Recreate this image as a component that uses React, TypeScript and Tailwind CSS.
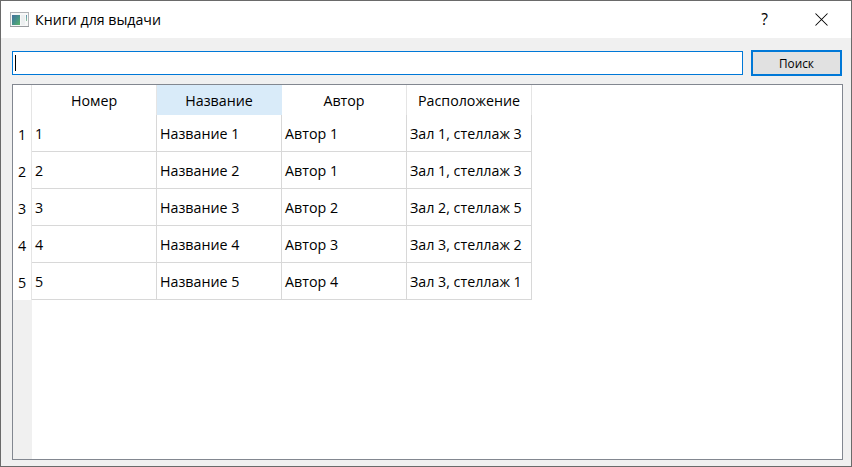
const columns = [
  { title: "Номер", tone: "bg-white border-[#e5e5e5]" },
  { title: "Название", tone: "bg-[#d9ebf9] border-[#d9ebf9]" },
  { title: "Автор", tone: "bg-white border-[#e5e5e5]" },
  { title: "Расположение", tone: "bg-white border-[#e5e5e5]" },
];

const rows = [
  ["1", "Название 1", "Автор 1", "Зал 1, стеллаж 3"],
  ["2", "Название 2", "Автор 1", "Зал 1, стеллаж 3"],
  ["3", "Название 3", "Автор 2", "Зал 2, стеллаж 5"],
  ["4", "Название 4", "Автор 3", "Зал 3, стеллаж 2"],
  ["5", "Название 5", "Автор 4", "Зал 3, стеллаж 1"],
];

function WindowIcon() {
  return (
    <svg width="19" height="16" viewBox="0 0 19 16" className="block">
      <defs>
        <linearGradient id="pane" x1="0" y1="0" x2="1" y2="1">
          <stop offset="0" stopColor="#44709e" />
          <stop offset="0.5" stopColor="#46908a" />
          <stop offset="1" stopColor="#5bb568" />
        </linearGradient>
        <linearGradient id="sliver" x1="0" y1="0" x2="0" y2="1">
          <stop offset="0" stopColor="#5b8fb0" />
          <stop offset="1" stopColor="#8cc69a" />
        </linearGradient>
      </defs>
      <rect x="0.5" y="0.5" width="18" height="14" fill="#f7f8f8" stroke="#b0b3b6" />
      <rect x="0" y="14" width="19" height="1" fill="#999c9f" />
      <rect x="2" y="3" width="8" height="10" fill="url(#pane)" />
      <rect x="11" y="3" width="4" height="10" fill="#eceff0" />
      <rect x="16" y="3" width="1" height="6" fill="url(#sliver)" />
    </svg>
  );
}

function TitleBar() {
  return (
    <header className="flex h-[37px] items-center bg-white pl-[9px]">
      <WindowIcon />
      <h1 className="ml-[6px] grow text-[14.2px] leading-5">Книги для выдачи</h1>
      <button className="w-[53px] pb-px text-center text-[15.5px] leading-5">?</button>
      <button className="flex w-[60px] justify-center pb-px" aria-label="Закрыть">
        <svg width="13" height="13" viewBox="0 0 13 13" fill="none" stroke="black" strokeWidth="1.05">
          <path d="M0.5 0.5 12.5 12.5M12.5 0.5 0.5 12.5" />
        </svg>
      </button>
    </header>
  );
}

function BookTable() {
  return (
    <div className="flex grow border border-[#828790] bg-white">
      <div className="flex w-[19px] flex-col bg-[#f0f0f0]">
        <div className="h-[30px] border-r border-[#e5e5e5] bg-white" />
        {rows.map((row) => (
          <div key={row[0]} className="flex h-[37px] items-center justify-center border-r border-[#e5e5e5] bg-white pt-[3px]">
            {row[0]}
          </div>
        ))}
      </div>
      <div>
        <div className="flex h-[30px]">
          {columns.map((column) => (
            <div key={column.title} className={`flex w-[125px] items-center justify-center border-r pt-[2px] ${column.tone}`}>
              {column.title}
            </div>
          ))}
        </div>
        {rows.map((row) => (
          <div key={row[0]} className="flex h-[37px]">
            {row.map((cell, i) => (
              <div key={i} className="flex w-[125px] items-center border-r border-b border-[#d8d8d8] pt-[2px] pl-[3px] whitespace-nowrap">
                {cell}
              </div>
            ))}
          </div>
        ))}
      </div>
    </div>
  );
}

export default function App() {
  return (
    <div className="flex h-[467px] w-[852px] flex-col border border-[#6a6a6a] bg-[#f0f0f0] font-['Open_Sans','Noto_Sans',sans-serif] text-[14.25px] leading-5 text-black">
      <TitleBar />
      <main className="flex grow flex-col pt-3 pr-2 pb-[6px] pl-[11px]">
        <div className="flex h-[26px] items-center">
          <div className="flex h-6 w-[731px] items-center border border-[#0078d7] bg-white pl-[2px]">
            <span className="h-4 w-px bg-black" />
          </div>
          <button className="ml-2 h-[26px] w-[91px] border-2 border-[#0078d7] bg-[#e1e1e1] text-[11.8px] leading-5">
            Поиск
          </button>
        </div>
        <div className="mt-2 flex grow">
          <BookTable />
        </div>
      </main>
    </div>
  );
}
